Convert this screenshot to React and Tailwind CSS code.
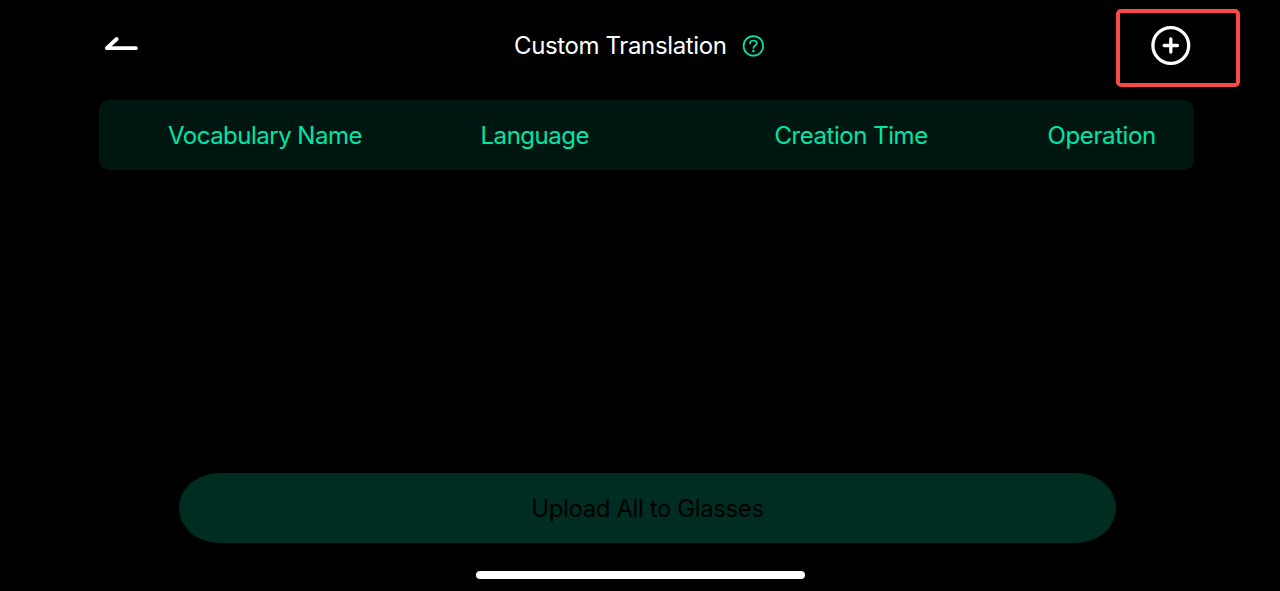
function BackIcon() {
  return (
    <svg className="h-5 w-9" viewBox="0 0 36 20" fill="none" stroke="white" strokeWidth="3.8" strokeLinecap="round" strokeLinejoin="round">
      <path d="M13.7 5 L3.8 14.2 H32.9" />
    </svg>
  );
}

function HelpIcon() {
  return (
    <svg className="h-6 w-6" viewBox="0 0 24 24" fill="none" stroke="#00e5a8" strokeWidth="1.7" strokeLinecap="round">
      <circle cx="12.4" cy="11.9" r="9.8" />
      <path d="M9 9.5 C9 7.6 10.4 6.5 12.4 6.5 C14.3 6.5 15.8 7.6 15.8 9.3 C15.8 11.4 12.4 11.6 12.4 13.9" />
      <circle cx="12.4" cy="17.1" r="1.3" fill="#00e5a8" stroke="none" />
    </svg>
  );
}

function AddIcon() {
  return (
    <svg className="h-10 w-10" viewBox="0 0 40 40" fill="none" stroke="white" strokeWidth="3.3" strokeLinecap="round">
      <circle cx="19.8" cy="20.5" r="17.9" />
      <path d="M19.8 13.9 V27.1 M13.2 20.5 H26.4" />
    </svg>
  );
}

export default function App() {
  return (
    <div className="flex h-[591px] w-[1280px] flex-col overflow-hidden bg-black font-['Inter',sans-serif] text-2xl leading-8 font-normal whitespace-nowrap">
      <header className="flex h-[100px] items-start pt-2">
        <button className="mt-[26px] ml-[103px]" aria-label="Back"><BackIcon /></button>
        <div className="mt-[22px] ml-[375px] flex w-[602px] items-center text-white">
          <h1 className="w-[227px]"><span className="tracking-[-0.37px]">Custom Translation</span></h1>
          <button aria-label="Help"><HelpIcon /></button>
        </div>
        <div className="mt-[0.5px] flex h-[78.5px] w-[124px] items-center rounded-[5px] border-4 border-[#f94b45] pb-[5px] pl-[31px]">
          <button aria-label="Add vocabulary"><AddIcon /></button>
        </div>
      </header>
      <div className="ml-[99px] flex h-[69.5px] w-[1094.5px] items-center rounded-[10px] bg-[#001711] pt-[2px] pl-[69px] text-[#00e5a8]">
        <div className="w-[312.5px] tracking-[-0.51px]"><span>Vocabulary Name</span></div>
        <div className="w-[294px] tracking-[-0.46px]"><span>Language</span></div>
        <div className="w-[273px] tracking-[-0.46px]"><span>Creation Time</span></div>
        <div className="tracking-[-0.38px]"><span>Operation</span></div>
      </div>
      <main className="flex-1" />
      <button className="ml-[179px] flex h-[69.5px] w-[937px] shrink-0 items-center justify-center rounded-[40px/35px] bg-[#002d22] pt-[2px] tracking-[-0.4px] text-black">
        <span>Upload All to Glasses</span>
      </button>
      <div className="mt-[28.5px] mb-3 ml-[475.5px] h-2 w-[329.5px] shrink-0 rounded-full bg-white" />
    </div>
  );
}
